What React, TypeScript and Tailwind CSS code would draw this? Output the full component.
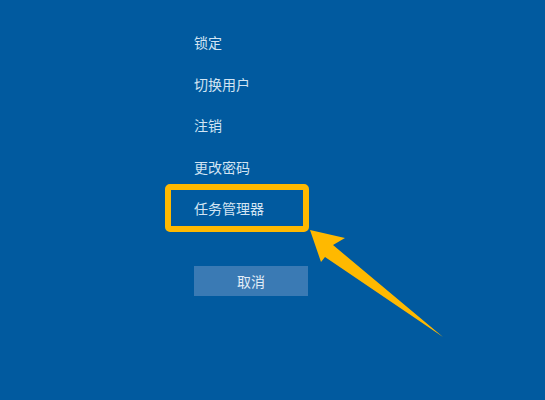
const items = ["锁定", "切换用户", "注销", "更改密码", "任务管理器"]

export default function App() {
  return (
    <div
      className="relative h-[400px] w-[545px] overflow-hidden bg-[#015a9f] text-[14px] text-[#d2e4f3]"
      style={{ fontFamily: '"Noto Sans CJK SC", "Noto Sans", sans-serif' }}
    >
      <div className="flex flex-col pl-[194px] pt-[22px]">
        {items.map((label) => (
          <div key={label} className="flex h-[41.5px] items-center">
            {label}
          </div>
        ))}
        <button className="mt-[36.5px] flex h-[30px] w-[114px] items-center justify-center bg-[#3a7ab4] text-[14px] text-[#e2edf7]">
          取消
        </button>
      </div>

      {/* highlight + arrow overlay */}
      <div className="absolute left-[165px] top-[184px] h-[48px] w-[144px] rounded-[5px] border-[6px] border-[#ffb900]" />
      <svg className="absolute left-0 top-0" width="545" height="400" viewBox="0 0 545 400">
        <polygon
          points="310,230 345,238 333,245 443,337 325,257 321,262"
          fill="#ffb900"
        />
      </svg>
    </div>
  )
}
